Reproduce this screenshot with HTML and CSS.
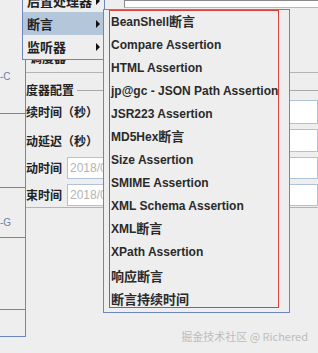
FILE: index.html
```html
<!DOCTYPE html>
<html lang="zh">
<head>
    <meta charset="UTF-8">
    <title>断言菜单</title>
    <link rel="stylesheet" href="styles.css">
</head>
<body>
    <div class="window">
        <div class="tree">
            <div class="node n1"><span class="node-label">-C</span></div>
            <div class="node n2"></div>
            <div class="node n3"><span class="node-label">-G</span></div>
            <div class="node n4"></div>
            <div class="node n5"></div>
        </div>
        <div class="main">
            <div class="name-row"><div class="name-field"></div></div>
            <div class="check-row"><span class="check-label">调度器</span></div>
            <div class="legend"><span class="label">调度器配置</span></div>
            <div class="form">
                <div class="row tall"><span class="label">持续时间（秒）</span><div class="field"></div></div>
                <div class="row"><span class="label">启动延迟（秒）</span><div class="field"></div></div>
                <div class="row short"><span class="label">启动时间</span><div class="field">2018/07/23 10:00:00</div></div>
                <div class="row short"><span class="label">结束时间</span><div class="field">2018/07/23 10:00:00</div></div>
            </div>
        </div>
    </div>

    <!-- 弹出菜单 -->
    <div class="menu">
        <div class="menu-item">后置处理器<span class="arrow"></span></div>
        <div class="menu-item active">断言<span class="arrow"></span></div>
        <div class="menu-item">监听器<span class="arrow"></span></div>
    </div>

    <div class="submenu">
        <div class="sub-item">BeanShell<span class="zh">断言</span></div>
        <div class="sub-item">Compare Assertion</div>
        <div class="sub-item">HTML Assertion</div>
        <div class="sub-item">jp@gc - JSON Path Assertion</div>
        <div class="sub-item">JSR223 Assertion</div>
        <div class="sub-item">MD5Hex<span class="zh">断言</span></div>
        <div class="sub-item">Size Assertion</div>
        <div class="sub-item">SMIME Assertion</div>
        <div class="sub-item">XML Schema Assertion</div>
        <div class="sub-item">XML<span class="zh">断言</span></div>
        <div class="sub-item">XPath Assertion</div>
        <div class="sub-item cn">响应断言</div>
        <div class="sub-item cn">断言持续时间</div>
    </div>

    <div class="highlight-box"></div>

    <div class="watermark">掘金技术社区 @ Richered</div>
</body>
</html>
```

FILE: styles.css
```css
body {
    margin: 0;
    width: 318px;
    height: 353px;
    overflow: hidden;
    position: relative;
    background-color: #eeeeee;
    font-family: "Liberation Sans", "Noto Sans CJK SC", sans-serif;
    color: #222;
}

.window {
    display: flex;
    height: 337px;
}

/* Arbre de gauche */
.tree {
    width: 25px;
    flex: none;
    border-right: 1px solid #6c86bf;
}

.node {
    box-sizing: border-box;
    border-bottom: 1px solid #6c86bf;
    font-size: 10px;
    line-height: 14px;
    color: #6d7fa8;
    overflow: hidden;
}

.n1 { height: 114px; padding-top: 70px; }
.n2 { height: 74px; }
.n3 { height: 50px; padding-top: 28px; }
.n4 { height: 72px; }
.n5 { height: 27px; }

/* Panneau principal */
.main {
    flex: 1;
    overflow: hidden;
}

.name-row {
    height: 8px;
}

.name-field {
    box-sizing: border-box;
    height: 8px;
    margin-left: 98px;
    background-color: #fff;
    border-top: 1px solid #8a8a8a;
    border-left: 1px solid #8a8a8a;
    border-bottom: 1px solid #b8b8b8;
}

.check-row {
    box-sizing: border-box;
    height: 65px;
    padding-top: 41px;
    border-bottom: 1px solid #b4b4b4;
}

.check-label,
.label {
    font-family: "Noto Sans CJK SC", sans-serif;
    font-weight: bold;
    font-size: 12px;
    line-height: 16px;
    white-space: nowrap;
}

.check-label {
    margin-left: 4px;
}

.label {
    flex: none;
    margin-left: -12px;
}

.legend {
    display: flex;
    align-items: center;
    height: 14px;
    margin-top: 10px;
}

.legend::after {
    content: "";
    flex: 1;
    border-top: 1px solid #a8a8a8;
    margin-left: 3px;
}

.form {
    display: flex;
    flex-direction: column;
    gap: 5px;
    margin-top: 3px;
    padding-bottom: 1px;
    border-bottom: 1px solid #b4b4b4;
}

.row {
    display: flex;
    align-items: center;
    height: 23px;
}

.row.tall { height: 24px; }
.row.short { height: 22px; }

.field {
    box-sizing: border-box;
    flex: 1;
    height: 100%;
    margin-left: 5px;
    background-color: #fff;
    border: 1px solid #b2c2d6;
    padding-left: 2px;
    font-size: 12px;
    line-height: 20px;
    color: #b4b4b4;
    white-space: nowrap;
    overflow: hidden;
}

/* Menu contextuel */
.menu {
    position: absolute;
    left: 22px;
    top: -12px;
    width: 83px;
    box-sizing: border-box;
    background-color: #eeeeee;
    border: 1px solid #6c86bf;
    padding-bottom: 1px;
}

.menu-item {
    display: flex;
    align-items: center;
    height: 23px;
    padding: 0 4px;
    font-family: "Noto Sans CJK SC", sans-serif;
    font-weight: bold;
    font-size: 13px;
    color: #222;
}

.menu-item.active {
    background-color: #b3c6da;
}

.arrow {
    margin-left: auto;
    width: 0;
    height: 0;
    border-top: 4px solid transparent;
    border-bottom: 4px solid transparent;
    border-left: 4px solid #111;
}

/* Sous-menu */
.submenu {
    position: absolute;
    left: 103px;
    top: 9px;
    width: 187px;
    box-sizing: border-box;
    background-color: #eeeeee;
    border: 1px solid #6c86bf;
    padding: 1px 0 2px 0;
}

.sub-item {
    height: 23px;
    line-height: 23px;
    padding-left: 7px;
    font-weight: bold;
    font-size: 12px;
    color: #2a2a2a;
    white-space: nowrap;
    overflow: hidden;
}

.sub-item .zh {
    font-family: "Noto Sans CJK SC", sans-serif;
    font-size: 13px;
    line-height: 1px;
}

.sub-item.cn {
    font-family: "Noto Sans CJK SC", sans-serif;
    font-size: 13px;
}

/* Cadre rouge */
.highlight-box {
    position: absolute;
    left: 109px;
    top: 10px;
    width: 170px;
    height: 298px;
    box-sizing: border-box;
    border: 1px solid #e0403c;
}

.watermark {
    position: absolute;
    right: 10px;
    bottom: 9px;
    font-family: "Noto Sans CJK SC", sans-serif;
    font-size: 11px;
    color: #bdbdbd;
}
```
